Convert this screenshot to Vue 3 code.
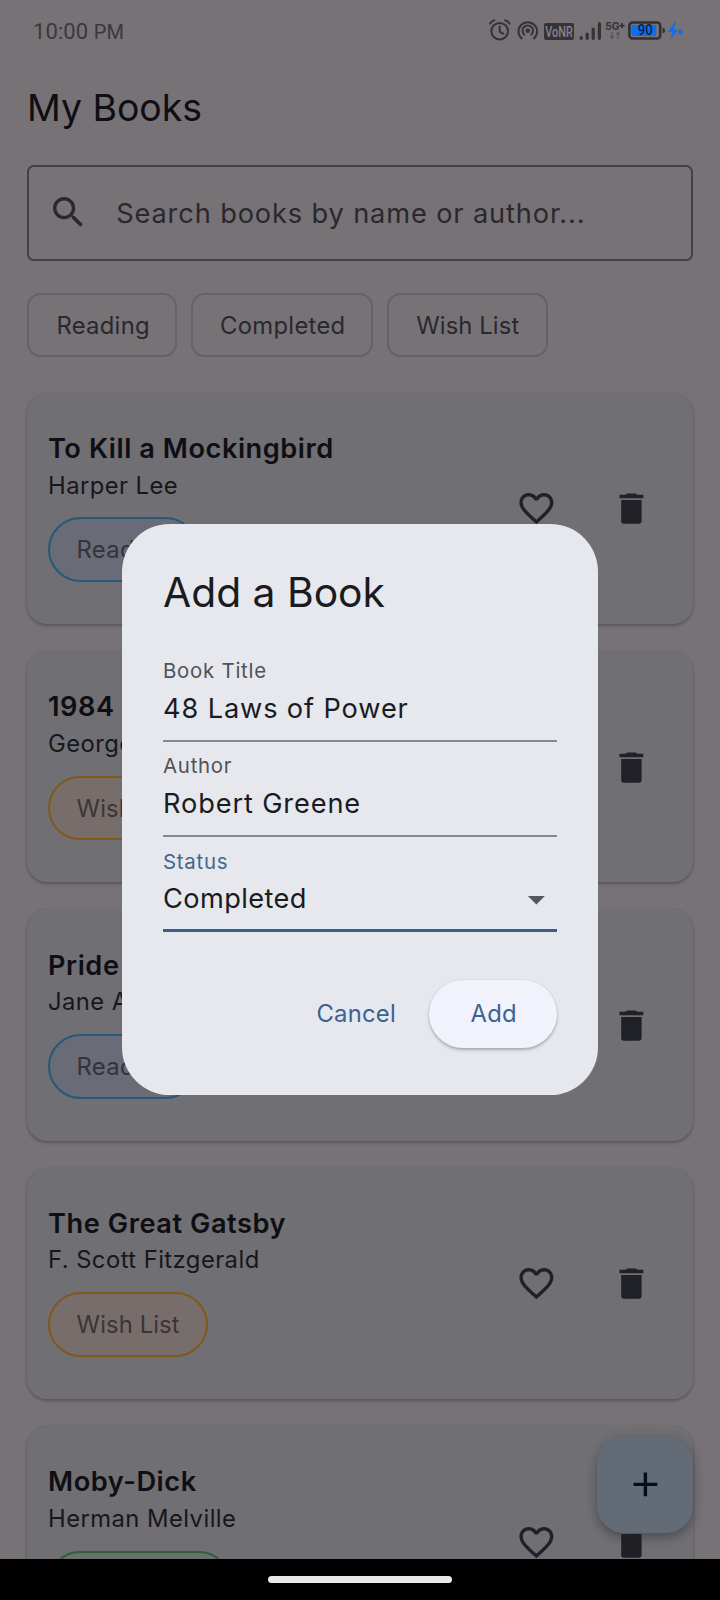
<script setup>
const filters = [
  { label: 'Reading', cls: 'f-reading' },
  { label: 'Completed', cls: 'f-completed' },
  { label: 'Wish List', cls: 'f-wish' }
]
const books = [
  { title: 'To Kill a Mockingbird', author: 'Harper Lee', status: 'Reading', cls: 'reading' },
  { title: '1984', author: 'George Orwell', status: 'Wish List', cls: 'wish' },
  { title: 'Pride and Prejudice', author: 'Jane Austen', status: 'Reading', cls: 'reading' },
  { title: 'The Great Gatsby', author: 'F. Scott Fitzgerald', status: 'Wish List', cls: 'wish' },
  { title: 'Moby-Dick', author: 'Herman Melville', status: 'Completed', cls: 'completed' }
]
</script>

<template>
  <div class="screen">
    <header class="status-bar">
      <div class="clock">10:00 <span>PM</span></div>
      <svg class="status-icons" width="206" height="26" viewBox="0 0 206 26">
        <g fill="none" stroke="#353238" stroke-width="2" stroke-linecap="round">
          <circle cx="11.7" cy="13.2" r="8.3" />
          <path d="M11.7 8.6v5l3.8 2.2" />
          <path d="M2 5.6Q3.5 3 6.4 2.2M17 2.2Q19.9 3 21.4 5.6" />
          <path d="M33.6 20.4A9.3 9.3 0 1 1 46 20.4" />
          <path d="M36.2 16.6A5.3 5.3 0 1 1 43.4 16.6" />
        </g>
        <circle cx="39.8" cy="12.8" r="2.3" fill="#353238" />
        <rect x="56" y="5" width="30" height="17" rx="2" fill="#353238" />
        <text x="57.2" y="18.8" textLength="27.6" lengthAdjust="spacingAndGlyphs" class="vonr">VoNR</text>
        <g stroke="#353238" stroke-width="3.2" stroke-linecap="round">
          <path d="M93.2 19.5v.8M99.2 16.2v4.1M105.2 11v9.3M111.4 5.6v14.7" />
        </g>
        <text x="117.2" y="12.2" textLength="14.4" lengthAdjust="spacingAndGlyphs" class="five">5G</text>
        <path d="M131.6 7.6h5M134.1 5.1v5" stroke="#353238" stroke-width="1.8" />
        <path d="M124 14v6M122.4 18.4l1.6 2 1.6-2M130 20.6v-6M128.4 16.4l1.6-2 1.6 2" fill="none" stroke="#555257" stroke-width="1.2" />
        <rect x="141.4" y="4.4" width="30.8" height="16" rx="3" fill="none" stroke="#302f35" stroke-width="2.5" />
        <rect x="143.6" y="7" width="24.6" height="11" fill="#0f6df0" />
        <path d="M174.6 9.8q2.4 0 2.4 2.7t-2.4 2.7z" fill="#302f35" />
        <text x="149.8" y="17.4" textLength="15" lengthAdjust="spacingAndGlyphs" class="pct">90</text>
        <path d="M187 3.8l-7.2 10.2h4.5l-1.7 7.4 7.5-10h-4.6l2.4-7z" fill="#0f6df0" />
        <path d="M192.2 9.8l1 3 2.8 1.2-2.8 1.1-1 3.2-1.1-3.2-2-1.1 2-1.2z" fill="#0f6df0" />
      </svg>
    </header>

    <h1 class="page-title">My Books</h1>

    <div class="search">
      <svg width="40.8" height="40.8" viewBox="0 0 24 24" fill="#29282f">
        <path d="M15.5 14h-.79l-.28-.27C15.41 12.59 16 11.11 16 9.5 16 5.91 13.09 3 9.5 3S3 5.91 3 9.5 5.91 16 9.5 16c1.61 0 3.09-.59 4.23-1.57l.27.28v.79l5 4.99L20.49 19l-4.99-5zm-6 0C7.01 14 5 11.99 5 9.5S7.01 5 9.5 5 14 7.01 14 9.5 11.99 14 9.5 14z" />
      </svg>
      <span>Search books by name or author...</span>
    </div>

    <div class="filters">
      <div v-for="f in filters" :key="f.label" class="filter" :class="f.cls">{{ f.label }}</div>
    </div>

    <main class="list">
      <article v-for="b in books" :key="b.title" class="card">
        <div class="info">
          <div class="title">{{ b.title }}</div>
          <div class="author">{{ b.author }}</div>
          <div class="tag" :class="b.cls">{{ b.status }}</div>
        </div>
        <div class="actions">
          <svg width="40.8" height="40.8" viewBox="0 0 24 24" fill="#202126">
            <path d="M16.5 3c-1.74 0-3.41.81-4.5 2.09C10.91 3.81 9.24 3 7.5 3 4.42 3 2 5.42 2 8.5c0 3.78 3.4 6.86 8.55 11.54L12 21.35l1.45-1.32C18.6 15.36 22 12.28 22 8.5 22 5.42 19.58 3 16.5 3zm-4.4 15.55l-.1.1-.1-.1C7.14 14.24 4 11.39 4 8.5 4 6.5 5.5 5 7.5 5c1.54 0 3.04.99 3.57 2.36h1.87C13.46 5.99 14.96 5 16.5 5c2 0 3.5 1.5 3.5 3.5 0 2.89-3.14 5.74-7.9 10.05z" />
          </svg>
          <svg width="40.8" height="40.8" viewBox="0 0 24 24" fill="#202126">
            <path d="M6 19.5c0 .83.67 1.5 1.5 1.5h9c.83 0 1.5-.67 1.5-1.5V7H6v12.5zM19 4h-3.5l-1-.8h-5l-1 .8H5v2h14V4z" />
          </svg>
        </div>
      </article>
    </main>

    <div class="fab">
      <svg width="40.8" height="40.8" viewBox="0 0 24 24" fill="#030e1b">
        <path d="M19 13h-6v6h-2v-6H5v-2h6V5h2v6h6v2z" />
      </svg>
    </div>

    <section class="dialog">
      <h2>Add a Book</h2>
      <div class="field">
        <label>Book Title</label>
        <div class="value">48 Laws of Power</div>
      </div>
      <div class="field">
        <label>Author</label>
        <div class="value">Robert Greene</div>
      </div>
      <div class="field focused">
        <label>Status</label>
        <div class="value select">
          <span>Completed</span>
          <svg width="40.8" height="40.8" viewBox="0 0 24 24" fill="#55575c"><path d="M7 10l5 5 5-5z" /></svg>
        </div>
      </div>
      <div class="buttons">
        <div class="cancel">Cancel</div>
        <div class="add">Add</div>
      </div>
    </section>

    <footer class="nav"><i></i></footer>
  </div>
</template>

<style>
body { background: #777276; }
</style>

<style scoped>
.screen {
  position: relative;
  box-sizing: border-box;
  width: 720px;
  height: 1600px;
  overflow: hidden;
  background: #777276;
  font-family: Inter, Roboto, sans-serif;
  font-weight: 380;
  color: #0e0e13;
}
.screen * { box-sizing: border-box; }
.status-bar {
  height: 86px;
  padding: 18px 26px 0 33px;
  display: flex;
  justify-content: space-between;
  align-items: flex-start;
}
.clock {
  padding-top: 1px;
  font: 400 22px/26px Roboto, sans-serif;
  color: #3b383e;
  letter-spacing: .1px;
}
.clock span { font-size: 20px; letter-spacing: 0; }
.vonr { font: 500 14px Roboto, sans-serif; fill: #89858a; }
.five { font: 700 11px Inter, sans-serif; fill: #353238; }
.pct { font: 500 14px Roboto, sans-serif; fill: #0b1d3b; }
.page-title {
  margin: 0 27px;
  font-size: 37.4px;
  line-height: 44px;
  font-weight: 380;
}
.search {
  margin: 35px 27px 0;
  height: 95.5px;
  border: 2px solid #434046;
  border-radius: 6.8px;
  display: flex;
  align-items: center;
  padding-left: 19px;
  gap: 27.4px;
  font-size: 27.2px;
  letter-spacing: .87px;
  color: #29282f;
}
.search span { padding-top: 2px; }
.filters { display: flex; gap: 13.7px; margin: 32.5px 27px 0; }
.filter {
  height: 64.3px;
  padding-left: 27.4px;
  border: 2px solid #656267;
  border-radius: 13.6px;
  font-size: 23.8px;
  line-height: 62px;
  letter-spacing: .3px;
  color: #29282f;
  white-space: nowrap;
}
.f-reading { width: 150px; }
.f-completed { width: 182.5px; }
.f-wish { width: 161px; letter-spacing: .1px; }
.list { margin: 35.6px 27px 0; display: flex; flex-direction: column; gap: 27.2px; }
.card {
  height: 231.1px;
  flex: none;
  display: flex;
  justify-content: space-between;
  padding: 35.9px 41px 0 21px;
  border-radius: 20.4px;
  background: #706f74;
  box-shadow: 0 2px 3px rgba(40, 40, 45, .36), 0 0 2px rgba(50, 50, 55, .12);
}
.title {
  padding-top: .4px;
  font-size: 27.2px;
  line-height: 39.4px;
  font-weight: 600;
  letter-spacing: .55px;
}
.author { font-size: 23.8px; line-height: 33px; letter-spacing: .45px; color: #17171c; }
.tag {
  width: 150px;
  height: 64.6px;
  margin-top: 15.8px;
  padding-left: 26.6px;
  border: 2px solid #275878;
  border-radius: 33px;
  font-size: 23.8px;
  line-height: 61px;
  letter-spacing: .3px;
  color: #33333b;
}
.tag.reading { background: #696b76; }
.tag.wish { width: 160.2px; background: #776e6b; border-color: #81591c; letter-spacing: .1px; color: #3a3536; }
.tag.completed { width: 182.5px; background: #6b706e; border-color: #315f3e; }
.actions { display: flex; gap: 54.6px; padding-top: 59.6px; }
.fab {
  position: absolute;
  left: 597.4px;
  top: 1437px;
  width: 95.4px;
  height: 95.6px;
  border-radius: 27.2px;
  background: #636b77;
  display: flex;
  align-items: center;
  justify-content: center;
  box-shadow: 0 5px 9px rgba(35, 35, 38, .34), 0 1px 12px rgba(40, 40, 44, .14);
}
.dialog {
  position: absolute;
  left: 122px;
  top: 524px;
  width: 476px;
  height: 571px;
  padding: 40.6px 41px 0;
  border-radius: 47.6px;
  background: #e6e8ed;
  color: #191b20;
}
.dialog h2 { margin: 0 0 28px; font-size: 40.8px; line-height: 54px; font-weight: 380; letter-spacing: 0; }
.field {
  height: 95.1px;
  padding-top: 10.8px;
  border-bottom: 2px solid #85888e;
}
.field label {
  display: block;
  font-size: 20.4px;
  line-height: 27px;
  letter-spacing: .75px;
  color: #505257;
}
.value { margin-top: 4.6px; font-size: 27.2px; line-height: 40.8px; letter-spacing: .87px; }
.field.focused { height: 95.4px; border-bottom: 3.4px solid #3a5f8c; }
.field.focused label { color: #426790; }
.select { display: flex; justify-content: space-between; letter-spacing: .4px; }
.select svg { margin-top: -.6px; }
.buttons {
  display: flex;
  justify-content: flex-end;
  align-items: center;
  margin-top: 48px;
  gap: 33.4px;
  font-size: 23.8px;
  letter-spacing: .25px;
  color: #3c6290;
}
.cancel { padding-bottom: 2px; }
.add {
  width: 127.6px;
  height: 68px;
  padding-left: 1px;
  border-radius: 34px;
  background: #f1f2fb;
  text-align: center;
  line-height: 67px;
  box-shadow: 0 2px 3px rgba(60, 62, 70, .34), 0 0 2px rgba(60, 62, 70, .12);
}
.nav {
  position: absolute;
  left: 0;
  bottom: 0;
  width: 720px;
  height: 41px;
  background: #000;
  display: flex;
  justify-content: center;
  padding-top: 17px;
}
.nav i { width: 184px; height: 7px; border-radius: 4px; background: #e9e9e9; }
</style>
